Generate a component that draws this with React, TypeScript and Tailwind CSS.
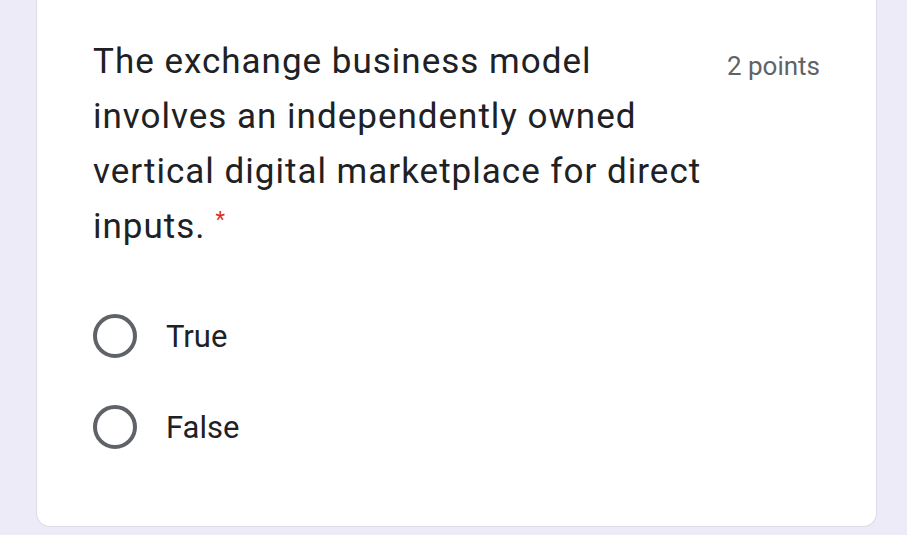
import React from 'react';

const options = ['True', 'False'];

const Radio = ({ label }: { label: string }) => (
  <div className="flex items-center h-[44px]">
    <div className="w-[44px] h-[44px] rounded-full border-[4px] border-[#5f6368] shrink-0" />
    <span className="ml-[29px] text-[31px] text-[#202124] leading-none">{label}</span>
  </div>
);

export default function App() {
  return (
    <div
      className="w-[907px] h-[535px] bg-[#ecebf7] pl-[36px] pr-[30px] pb-[8px] overflow-hidden"
      style={{ fontFamily: 'Roboto, "Liberation Sans", sans-serif' }}
    >
      <div className="h-full bg-white rounded-b-[14px] border-x border-b border-[#dcdbe6] pl-[56px] pr-[56px] pt-[34px]">
        <div className="flex justify-between items-start">
          <p className="w-[628px] shrink-0 text-[35px] tracking-[1px] leading-[55px] text-[#202124]">
            The exchange business model involves an independently owned vertical digital
            marketplace for direct inputs.
            <span className="inline-block leading-none text-[22px] text-[#d93025] align-top ml-[10px] mt-[10px]">*</span>
          </p>
          <span className="text-[26px] text-[#5f6368] mt-[13px] whitespace-nowrap">2 points</span>
        </div>
        <div className="flex flex-col gap-[47px] mt-[60px]">
          {options.map((o) => (
            <Radio key={o} label={o} />
          ))}
        </div>
      </div>
    </div>
  );
}
